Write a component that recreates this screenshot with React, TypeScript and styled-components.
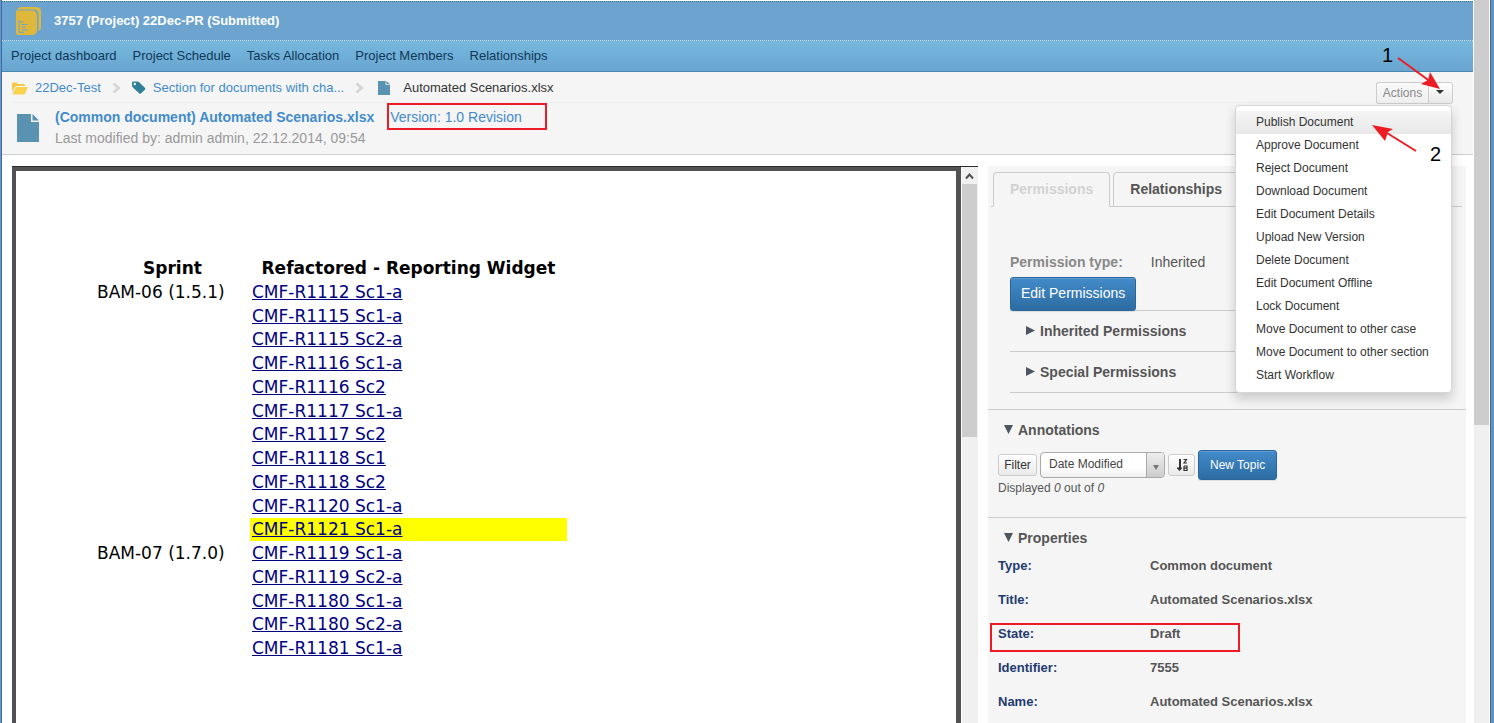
import React from "react";
import styled, { createGlobalStyle, css } from "styled-components";

const GlobalStyle = createGlobalStyle`
  *, *::before, *::after { box-sizing: border-box; }
  body {
    margin: 0;
    background: #fff;
    color: #555;
    font-family: "Liberation Sans", Arial, sans-serif;
    font-size: 13px;
    line-height: 20px;
  }
  button, select { font-family: inherit; }
  a { text-decoration: none; }
`;

const Window = styled.div`
  display: flex;
  height: 100vh;
  overflow: hidden;
  border-left: 1px solid #6496cf;
`;

const Page = styled.div`
  flex: 1;
  min-width: 0;
  display: flex;
  flex-direction: column;
  padding-top: 1px;
  border-left: 1px solid #426b9c;
`;

const PageScrollbar = styled.div`
  width: 21px;
  padding-left: 1px;
  padding-right: 1px;
  border-right: 3px solid #6692c0;
  background: linear-gradient(#f0f0f0, #f0f0f0) 1px 0 / 15px 100% no-repeat;
  box-shadow: inset -1px 0 0 #3d6794;
`;

const PageThumb = styled.div`
  width: 15px;
  height: 425px;
  background: #cdcdcd;
`;

const TitleBar = styled.header`
  display: flex;
  align-items: center;
  gap: 12px;
  height: 40px;
  padding: 0 13px;
  border-top: 1px dotted #3f7f7a;
  border-bottom: 1px dotted #cfe2f0;
  background: #6ca4cf;
`;

const ProjectTitle = styled.h1`
  margin: 0;
  color: #fff;
  font-size: 13px;
  line-height: 20px;
`;

const NavBar = styled.nav`
  display: flex;
  align-items: center;
  gap: 16px;
  height: 31px;
  padding: 0 9px;
  border-bottom: 1px solid #4787b4;
  background: linear-gradient(#76b8de, #6aa5cf);
`;

const NavLink = styled.a`
  color: #0e3857;
`;

const ContextBar = styled.section`
  display: flex;
  height: 83px;
  padding: 0 20px 0 10px;
  border-bottom: 1px solid #ccc;
  background: #f5f5f5;
`;

const ContextInfo = styled.div`
  flex: 1;
  min-width: 0;
  margin-right: 55px;
`;

const Breadcrumb = styled.nav`
  display: flex;
  align-items: center;
  height: 31px;
  padding-top: 2px;
  border-bottom: 1px solid #eee;
`;

const Crumb = styled.a`
  display: flex;
  align-items: center;
  gap: 7px;
  color: #428bca;
`;

const CurrentCrumb = styled.span`
  display: flex;
  align-items: center;
  gap: 13px;
  margin-left: 3px;
  color: #333;
`;

const Separator = styled.svg`
  margin: 0 11px;
`;

const DocumentRow = styled.div`
  display: flex;
  gap: 16px;
  padding: 4px 0 0 5px;
  font-size: 14px;
`;

const DocumentIconBox = styled.div`
  padding-top: 7px;
  line-height: 0;
`;

const DocumentTitle = styled.div`
  display: flex;
  gap: 16px;
  color: #428bca;
  line-height: 21px;
`;

const Highlighted = styled.a`
  position: relative;
  color: #428bca;

  &::after {
    content: "";
    position: absolute;
    top: -4px;
    left: -3px;
    width: 160px;
    height: 27px;
    border: 2px solid #ed1c24;
  }
`;

const Modified = styled.div`
  color: #999;
  line-height: 21px;
`;

const ActionsGroup = styled.div`
  position: relative;
  display: flex;
  align-self: flex-start;
  margin-top: 10px;
`;

const buttonFace = css`
  border: 1px solid #ccc;
  background: linear-gradient(#fff, #e9e9e9);
  color: #333;
  padding: 0;
`;

const ActionsButton = styled.button`
  ${buttonFace}
  width: 52px;
  height: 22px;
  border-radius: 3px 0 0 3px;
  border-right: 0;
  background: linear-gradient(#fafafa, #efefef);
  color: #888;
  font-size: 12px;
`;

const CaretButton = styled.button`
  ${buttonFace}
  display: flex;
  align-items: center;
  justify-content: center;
  width: 25px;
  height: 22px;
  padding: 0 2px 2px 0;
  border-radius: 0 3px 3px 0;
`;

const Menu = styled.ul`
  position: absolute;
  z-index: 2;
  top: 23px;
  right: 1px;
  width: 217px;
  margin: 0;
  padding: 5px 0;
  border: 1px solid #d6d6d6;
  border-radius: 4px;
  background: #fff;
  box-shadow: 0 6px 12px rgba(0, 0, 0, 0.18);
  list-style: none;
`;

const MenuItem = styled.button<{ $active: boolean }>`
  display: block;
  width: 100%;
  height: 23px;
  padding: 0 20px;
  border: 0;
  background: ${(p) => (p.$active ? "linear-gradient(#f5f5f5, #e8e8e8)" : "none")};
  color: #333;
  font-size: 12px;
  line-height: 23px;
  text-align: left;
  white-space: nowrap;
`;

const Callouts = styled.svg`
  position: absolute;
  z-index: 3;
  top: -40px;
  right: 0;
  pointer-events: none;
`;

const Content = styled.main`
  flex: 1;
  min-height: 0;
  display: flex;
  gap: 10px;
  padding: 11px 7px 0 10px;
  overflow: hidden;
`;

const Viewer = styled.section`
  flex: 1;
  min-width: 0;
  display: flex;
  border-top: 1px solid #2b2b2b;
`;

const Sheet = styled.div`
  flex: 1;
  border: solid #525254;
  border-width: 4px 5px 0 4px;
  padding: 85px 0 0 76px;
`;

const ViewerScrollbar = styled.div`
  width: 17px;
  border-left: 1px solid #fff;
  background: #f0f0f0;
`;

const ScrollUp = styled.button`
  display: flex;
  align-items: center;
  justify-content: center;
  width: 15px;
  height: 17px;
  padding: 0;
  border: 0;
  background: none;
`;

const ViewerThumb = styled.div`
  width: 15px;
  height: 253px;
  background: #cdcdcd;
`;

const ScenarioTable = styled.table`
  height: 404px;
  border-collapse: collapse;
  color: #000;
  font-family: "DejaVu Sans", sans-serif;
  font-size: 17px;
  line-height: 20px;

  th, td { padding: 0 2px; white-space: nowrap; }
  th { height: 24px; }
  td { text-align: left; }
  th:first-child, td:first-child { width: 158px; }
  th:last-child, td:last-child { width: 317px; }
  th:first-child { padding-left: 5px; }
  td:first-child { padding-left: 5px; }
`;

const ScenarioCell = styled.td<{ $marked: boolean }>`
  background: ${(p) => (p.$marked ? "#ff0" : "transparent")};
`;

const ScenarioLink = styled.a`
  color: #000080;
  text-decoration: underline;
`;

const Sidebar = styled.aside`
  flex: 0 0 478px;
  background: #f5f5f5;
`;

const Tabs = styled.div`
  display: flex;
  gap: 3px;
  margin: 0 4px 0 3px;
  padding: 6px 0 0 2px;
  border-bottom: 1px solid #ccc;
`;

const Tab = styled.button<{ $selected: boolean }>`
  height: 35px;
  margin-bottom: -1px;
  padding: 0 16px 2px;
  border: 1px solid #ccc;
  border-bottom-color: ${(p) => (p.$selected ? "#f5f5f5" : "#ccc")};
  border-radius: 4px 4px 0 0;
  background: #f5f5f5;
  color: ${(p) => (p.$selected ? "#d2d2d2" : "#555")};
  font-size: 14px;
  font-weight: bold;
`;

const PermissionsPane = styled.div`
  padding: 45px 22px 16px;
  border-bottom: 1px solid #ccc;
  font-size: 14px;
`;

const PermissionHeader = styled.div`
  border-bottom: 1px solid #ccc;
`;

const PermissionType = styled.div`
  display: flex;
  gap: 28px;
  padding-bottom: 5px;
  line-height: 20px;

  strong { color: #888; }
`;

const PrimaryButton = styled.button<{ $large?: boolean }>`
  display: block;
  height: ${(p) => (p.$large ? "34px" : "30px")};
  margin-bottom: ${(p) => (p.$large ? "-1px" : "0")};
  padding: ${(p) => (p.$large ? "0 10px 2px" : "0 11px")};
  border: 1px solid #2b669a;
  border-radius: 3px;
  background: linear-gradient(#428bca, #2d6ca2);
  box-shadow: inset 0 1px 0 rgba(255, 255, 255, 0.15), 0 1px 1px rgba(0, 0, 0, 0.1);
  color: #fff;
  font-size: ${(p) => (p.$large ? "14px" : "12px")};
  white-space: nowrap;
`;

const FoldButton = styled.button`
  display: flex;
  align-items: center;
  gap: 5px;
  width: 100%;
  height: 41px;
  padding: 0 0 0 16px;
  border: 0;
  border-bottom: 1px solid #ccc;
  background: none;
  color: #555;
  font-size: 14px;
  font-weight: bold;
`;

const Section = styled.section<{ $last?: boolean }>`
  padding: 10px 10px 0;
  border-bottom: ${(p) => (p.$last ? "0" : "1px solid #ccc")};
`;

const SectionTitle = styled.h2`
  display: flex;
  align-items: center;
  gap: 5px;
  margin: 0;
  padding-left: 6px;
  font-size: 14px;
  line-height: 20px;
`;

const FilterRow = styled.div`
  display: flex;
  align-items: center;
  gap: 3px;
  padding-top: 10px;
`;

const SmallButton = styled.button<{ $width: number }>`
  ${buttonFace}
  display: flex;
  align-items: center;
  justify-content: center;
  width: ${(p) => p.$width}px;
  height: 22px;
  border-radius: 3px;
  font-size: 12px;
`;

const SelectBox = styled.label`
  display: flex;
  width: 125px;
  height: 26px;
  border: 1px solid #aaa;
  border-radius: 4px;
  background: linear-gradient(#fff, #fff 60%, #f0f0f0);
  overflow: hidden;
`;

const SortSelect = styled.select`
  appearance: none;
  flex: 1;
  padding: 0 8px 2px;
  border: 0;
  background: none;
  color: #444;
  font-size: 12px;
`;

const SelectArrow = styled.span`
  display: flex;
  align-items: center;
  justify-content: center;
  width: 18px;
  padding-top: 4px;
  border-left: 1px solid #aaa;
  background: linear-gradient(#eee, #ccc);
  pointer-events: none;
`;

const Displayed = styled.p`
  margin: 0;
  padding-bottom: 21px;
  font-size: 12px;
  line-height: 16px;
`;

const PropertyTable = styled.table`
  width: 100%;
  margin-top: 1px;
  border-collapse: collapse;
  font-weight: bold;

  th, td {
    height: 34px;
    padding: 0;
    text-align: left;
  }

  th {
    width: 152px;
    color: #1f3b70;
  }
`;

const PropertyRow = styled.tr<{ $boxed: boolean }>`
  position: relative;

  ${(p) =>
    p.$boxed &&
    css`
      th::after {
        content: "";
        position: absolute;
        top: 6px;
        left: -8px;
        width: 250px;
        height: 29px;
        border: 2px solid #ed1c24;
      }
    `}
`;

const DocumentIcon = ({ width, height }: { width: number; height: number }) => (
  <svg width={width} height={height} viewBox="0 0 22 28" preserveAspectRatio="none" aria-hidden="true">
    <path d="M0 0H14V8H22V28H0Z" fill="#5a93b1" />
    <path d="M15.5 0L22 6.5H15.5Z" fill="#5a93b1" />
  </svg>
);

const ProjectIcon = () => (
  <svg width="27" height="28" viewBox="0 0 27 28" aria-hidden="true">
    <path d="M2 2.500Q3 0 6 0H21Q26 0 26 5V20Q26 23 23.500 24V7Q23.500 2.500 19 2.500Z" fill="#dfb73a" />
    <path d="M1 4Q1 3.500 2 3.500H17Q22 3.500 22 8.500V23Q22 28 17 28H3Q1 28 1 26Z" fill="#dfb73a" />
    <path d="M4 13V25.500M4 14.800H8.500M6.500 17.500H12.500M6.500 20.200H10.500M6.500 22.900H12.500M4 25.300H9" stroke="#6ca4cf" strokeWidth="1" fill="none" />
  </svg>
);

const FolderIcon = () => (
  <svg width="16" height="13" viewBox="0 0 16 13" aria-hidden="true">
    <path d="M0 10V2Q0 .5 1.500 .5H4.500L6 2H12Q13 2 13 3.500V4H4.500Q3.500 4 3 5Z" fill="#f6c945" />
    <path d="M4.500 5H16L13 11.500Q12.600 12.500 11.500 12.500H.5L3.500 5.800Q4 5 4.500 5Z" fill="#fad14b" />
  </svg>
);

const TagIcon = () => (
  <svg width="14" height="14" viewBox="0 0 15 15" aria-hidden="true">
    <path
      fillRule="evenodd"
      fill="#2f7f98"
      d="M0 1.500Q0 .5 1.500 .5H6Q7 .5 8 1.500L14 7.500Q14.700 8.300 14 9L9.500 13.500Q8.700 14.200 8 13.500L1.500 7.500Q0 6 0 5ZM3 2A1.300 1.300 0 1 0 3 4.600A1.300 1.300 0 1 0 3 2Z"
    />
  </svg>
);

const Chevron = () => (
  <Separator width="9" height="12" viewBox="0 0 9 12" aria-hidden="true">
    <path d="M1.500 1.500L6.500 6L1.500 10.500" stroke="#d6d6d6" strokeWidth="3" fill="none" />
  </Separator>
);

const Triangle = ({ open }: { open: boolean }) => (
  <svg width="9" height="10" viewBox="0 0 9 10" aria-hidden="true">
    <path d={open ? "M0 0H9L4.500 9Z" : "M0 0L9 4.500L0 9Z"} fill="#4d5660" />
  </svg>
);

const SortIcon = () => (
  <svg width="12" height="14" viewBox="0 0 12 14" aria-hidden="true">
    <path d="M3 1H5V9.500H6V10.500L3.500 13L1 10.500V9.500H3Z" fill="#333" />
    <path d="M7.500 1.500H10.500L8 5H11" stroke="#333" strokeWidth="1.200" fill="none" />
    <path d="M8 8H11V12.500H8V8M8 10.200H11" stroke="#333" strokeWidth="1.200" fill="none" />
  </svg>
);

const navItems = ["Project dashboard", "Project Schedule", "Tasks Allocation", "Project Members", "Relationships"];

const actions = [
  "Publish Document",
  "Approve Document",
  "Reject Document",
  "Download Document",
  "Edit Document Details",
  "Upload New Version",
  "Delete Document",
  "Edit Document Offline",
  "Lock Document",
  "Move Document to other case",
  "Move Document to other section",
  "Start Workflow",
];

const scenarios = [
  { sprint: "BAM-06 (1.5.1)", name: "CMF-R1112 Sc1-a" },
  { name: "CMF-R1115 Sc1-a" },
  { name: "CMF-R1115 Sc2-a" },
  { name: "CMF-R1116 Sc1-a" },
  { name: "CMF-R1116 Sc2" },
  { name: "CMF-R1117 Sc1-a" },
  { name: "CMF-R1117 Sc2" },
  { name: "CMF-R1118 Sc1" },
  { name: "CMF-R1118 Sc2" },
  { name: "CMF-R1120 Sc1-a" },
  { name: "CMF-R1121 Sc1-a", marked: true },
  { sprint: "BAM-07 (1.7.0)", name: "CMF-R1119 Sc1-a" },
  { name: "CMF-R1119 Sc2-a" },
  { name: "CMF-R1180 Sc1-a" },
  { name: "CMF-R1180 Sc2-a" },
  { name: "CMF-R1181 Sc1-a" },
];

const properties = [
  { label: "Type:", value: "Common document" },
  { label: "Title:", value: "Automated Scenarios.xlsx" },
  { label: "State:", value: "Draft", boxed: true },
  { label: "Identifier:", value: "7555" },
  { label: "Name:", value: "Automated Scenarios.xlsx" },
];

export default function App() {
  return (
    <>
      <GlobalStyle />
      <Window>
        <Page>
          <TitleBar>
            <ProjectIcon />
            <ProjectTitle>3757 (Project) 22Dec-PR (Submitted)</ProjectTitle>
          </TitleBar>
          <NavBar aria-label="Project">
            {navItems.map((item) => (
              <NavLink href="#" key={item}>{item}</NavLink>
            ))}
          </NavBar>
          <ContextBar>
            <ContextInfo>
              <Breadcrumb aria-label="Breadcrumb">
                <Crumb href="#"><FolderIcon />22Dec-Test</Crumb>
                <Chevron />
                <Crumb href="#"><TagIcon />Section for documents with cha...</Crumb>
                <Chevron />
                <CurrentCrumb><DocumentIcon width={12} height={14} />Automated Scenarios.xlsx</CurrentCrumb>
              </Breadcrumb>
              <DocumentRow>
                <DocumentIconBox><DocumentIcon width={22} height={28} /></DocumentIconBox>
                <div>
                  <DocumentTitle>
                    <strong>(Common document) Automated Scenarios.xlsx</strong>
                    <Highlighted href="#">Version: 1.0 Revision</Highlighted>
                  </DocumentTitle>
                  <Modified>Last modified by: admin admin, 22.12.2014, 09:54</Modified>
                </div>
              </DocumentRow>
            </ContextInfo>
            <ActionsGroup>
              <ActionsButton type="button">Actions</ActionsButton>
              <CaretButton type="button" aria-label="Show actions">
                <svg width="8" height="4" viewBox="0 0 8 4" aria-hidden="true"><path d="M0 0H8L4 4Z" fill="#333" /></svg>
              </CaretButton>
              <Menu>
                {actions.map((action, i) => (
                  <li key={action}><MenuItem type="button" $active={i === 0}>{action}</MenuItem></li>
                ))}
              </Menu>
              <Callouts width="90" height="130" viewBox="0 0 90 130">
                <g fill="#ed1c24" stroke="none">
                  <path d="M35 16L68 40" stroke="#ed1c24" strokeWidth="2" />
                  <path d="M77 47L58 42L65 38L67 30Z" />
                  <path d="M53 109L24 91" stroke="#ed1c24" strokeWidth="2" />
                  <path d="M9 83L30 87L25 90L22 99Z" />
                </g>
                <g fill="#000" fontSize="20">
                  <text x="19" y="20">1</text>
                  <text x="67" y="119">2</text>
                </g>
              </Callouts>
            </ActionsGroup>
          </ContextBar>
          <Content>
            <Viewer aria-label="Document preview">
              <Sheet>
                <ScenarioTable>
                  <thead>
                    <tr><th>Sprint</th><th>Refactored - Reporting Widget</th></tr>
                  </thead>
                  <tbody>
                    {scenarios.map((s) => (
                      <tr key={s.name}>
                        <td>{s.sprint}</td>
                        <ScenarioCell $marked={!!s.marked}><ScenarioLink href="#">{s.name}</ScenarioLink></ScenarioCell>
                      </tr>
                    ))}
                  </tbody>
                </ScenarioTable>
              </Sheet>
              <ViewerScrollbar>
                <ScrollUp type="button" aria-label="Scroll up">
                  <svg width="9" height="8" viewBox="0 0 9 8" aria-hidden="true">
                    <path d="M1 6.500L4.500 2.500L8 6.500" stroke="#505050" strokeWidth="2" fill="none" />
                  </svg>
                </ScrollUp>
                <ViewerThumb />
              </ViewerScrollbar>
            </Viewer>
            <Sidebar>
              <Tabs role="tablist">
                <Tab type="button" role="tab" $selected>Permissions</Tab>
                <Tab type="button" role="tab" $selected={false}>Relationships</Tab>
              </Tabs>
              <PermissionsPane>
                <PermissionHeader>
                  <PermissionType><strong>Permission type:</strong><span>Inherited</span></PermissionType>
                  <PrimaryButton type="button" $large>Edit Permissions</PrimaryButton>
                </PermissionHeader>
                <FoldButton type="button"><Triangle open={false} />Inherited Permissions</FoldButton>
                <FoldButton type="button"><Triangle open={false} />Special Permissions</FoldButton>
              </PermissionsPane>
              <Section>
                <SectionTitle><Triangle open />Annotations</SectionTitle>
                <FilterRow>
                  <SmallButton type="button" $width={39}>Filter</SmallButton>
                  <SelectBox>
                    <SortSelect aria-label="Sort by" defaultValue="modified">
                      <option value="modified">Date Modified</option>
                    </SortSelect>
                    <SelectArrow>
                      <svg width="6" height="5" viewBox="0 0 6 5" aria-hidden="true"><path d="M0 0H6L3 5Z" fill="#777" /></svg>
                    </SelectArrow>
                  </SelectBox>
                  <SmallButton type="button" $width={27} aria-label="Sort order"><SortIcon /></SmallButton>
                  <PrimaryButton type="button">New Topic</PrimaryButton>
                </FilterRow>
                <Displayed>Displayed <em>0</em> out of <em>0</em></Displayed>
              </Section>
              <Section $last>
                <SectionTitle><Triangle open />Properties</SectionTitle>
                <PropertyTable>
                  <tbody>
                    {properties.map((p) => (
                      <PropertyRow key={p.label} $boxed={!!p.boxed}>
                        <th scope="row">{p.label}</th>
                        <td>{p.value}</td>
                      </PropertyRow>
                    ))}
                  </tbody>
                </PropertyTable>
              </Section>
            </Sidebar>
          </Content>
        </Page>
        <PageScrollbar><PageThumb /></PageScrollbar>
      </Window>
    </>
  );
}
